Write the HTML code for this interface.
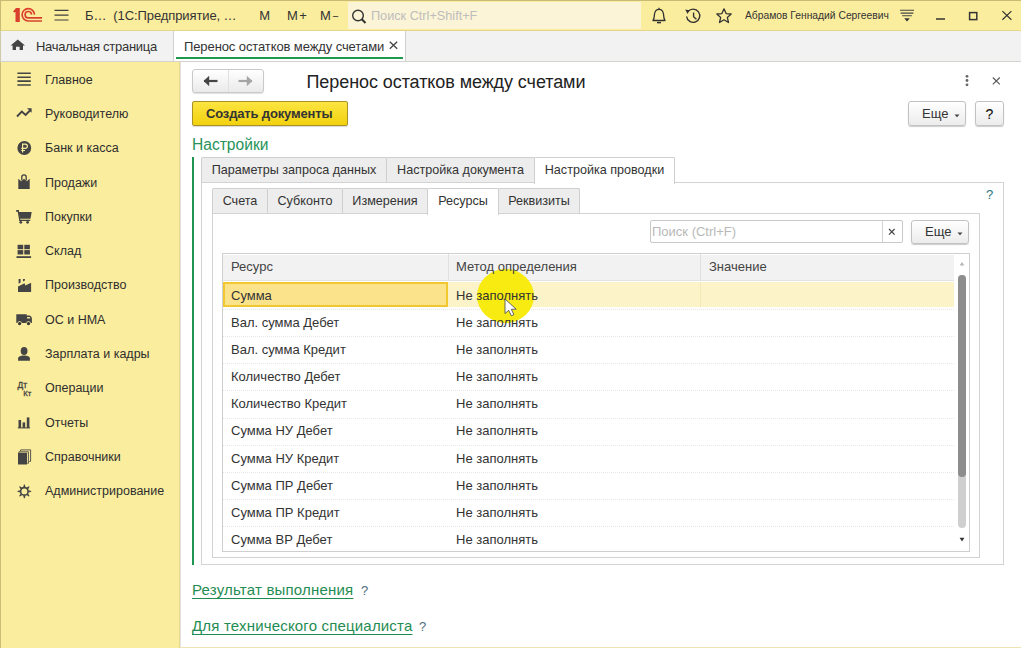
<!DOCTYPE html>
<html><head><meta charset="utf-8">
<style>
*{box-sizing:border-box;margin:0;padding:0}
html,body{width:1021px;height:648px;overflow:hidden;background:#fff;font-family:"Liberation Sans",sans-serif;color:#333}
.a{position:absolute;white-space:nowrap}
#top{position:absolute;left:0;top:0;width:1021px;height:31px;background:#FBED9E;border-top:1px solid #c9bb73;border-left:1px solid #c9bb73;border-bottom:1px solid #E6D68A}
#tabs{position:absolute;left:0;top:31px;width:1021px;height:31px;background:#F2F2F2;border-bottom:1px solid #d3d2cc;box-shadow:inset 1px 0 0 #cfc9a8}
#side{position:absolute;left:0;top:62px;width:180px;height:586px;background:#FBED9E;box-shadow:inset 1px 0 0 #cdbf78;border-right:1px solid #E9DA8E}
.si{position:absolute;left:45px;font-size:12.5px;color:#2e2e2e}
.ic{position:absolute;left:17px}
#form{position:absolute;left:180px;top:62px;width:841px;height:586px;background:#fff;border-left:1px solid #e2e2e2;border-bottom:1px solid #EDE3B3}
.btn{position:absolute;border:1px solid #b5b5b5;border-radius:2px;background:linear-gradient(#fff,#ececec);box-shadow:0 1px 1px rgba(0,0,0,.15);font-size:13px;color:#333}
.tab{position:absolute;height:25px;border:1px solid #cfcfcf;border-bottom:none;border-radius:2px 2px 0 0;background:#EDEDED;font-size:12.6px;color:#333;text-align:center;line-height:25px}
.tab.act{background:#fff;height:27px;z-index:1}
.row{position:absolute;left:0;width:734px;height:27px;border-bottom:1px dotted #e0e0e0;font-size:13px;color:#333}
.row span{position:absolute;top:6px}
</style></head><body>

<div id="top">
<svg class="a" style="left:-1px;top:-1px" width="50" height="30" viewBox="0 0 50 30">
<path d="M13.1 11.6 L16 7.9 L19.8 7.9 L19.8 22 L15.5 22 L15.5 11.9 L14.2 12.6 Z" fill="#D9412E"/>
<path d="M34.5 14.6 A6.2 6.2 0 1 0 28.3 21 L42 21" fill="none" stroke="#D9412E" stroke-width="1.7"/>
<path d="M31.5 14.6 A3.2 3.2 0 1 0 28.3 17.9 L42 17.9" fill="none" stroke="#D9412E" stroke-width="1.7"/>
</svg>
<svg class="a" style="left:53px;top:8px" width="16" height="13"><path d="M0.5 1.3H14.5M0.5 6.1H14.5M0.5 11H14.5" stroke="#3e3e3e" stroke-width="1.2"/></svg>
<div class="a" style="left:84px;top:7px;font-size:13px;letter-spacing:-0.1px;color:#333">Б…&nbsp; (1С:Предприятие, …</div>
<div class="a" style="left:258.3px;top:7px;font-size:13px;color:#333">М</div>
<div class="a" style="left:286px;top:7px;font-size:13px;color:#333">М<span style="margin-left:1.5px">+</span></div>
<div class="a" style="left:319px;top:7px;font-size:13px;color:#333">М<span style="margin-left:1.5px;font-size:11px">−</span></div>
<div class="a" style="left:347px;top:1px;width:293px;height:27px;background:#FCF4D6"></div>
<svg class="a" style="left:350px;top:7.5px" width="17" height="16"><circle cx="7" cy="6.5" r="5.3" fill="none" stroke="#333" stroke-width="1.4"/><path d="M10.8 10.3L14.5 14" stroke="#333" stroke-width="2"/></svg>
<div class="a" style="left:370px;top:7.5px;font-size:12.7px;color:#bdbdbd">Поиск Ctrl+Shift+F</div>
<svg class="a" style="left:648.5px;top:6px" width="18" height="18"><path d="M3 13.5 C4.5 11.5 4.2 9 4.5 7 C5 3.8 7 2.3 9 2.3 C11 2.3 13 3.8 13.5 7 C13.8 9 13.5 11.5 15 13.5 Z" fill="none" stroke="#333" stroke-width="1.3" stroke-linejoin="round"/><path d="M7 15.6H11" stroke="#333" stroke-width="1.5"/><path d="M8.4 1.5H9.6" stroke="#333" stroke-width="1.3"/></svg>
<svg class="a" style="left:681.5px;top:5px" width="19" height="18"><path d="M5.0 5.6 A6.6 6.6 0 1 1 3.6 10.5" fill="none" stroke="#333" stroke-width="1.4"/><path d="M2.2 3.6 L6.4 4.2 L4.6 8 Z" fill="#333"/><path d="M10.6 6.6V10.8L13.4 13.2" fill="none" stroke="#333" stroke-width="1.4"/></svg>
<svg class="a" style="left:714px;top:5.7px" width="18" height="18"><path d="M9 1.8 L11.1 6.6 L16.2 7 L12.3 10.4 L13.5 15.5 L9 12.8 L4.5 15.5 L5.7 10.4 L1.8 7 L6.9 6.6 Z" fill="none" stroke="#333" stroke-width="1.3" stroke-linejoin="round"/></svg>
<div class="a" style="left:744px;top:9px;font-size:10.3px;color:#333">Абрамов Геннадий Сергеевич</div>
<svg class="a" style="left:898px;top:7px" width="17" height="16"><path d="M1 2.3H15M1.6 5.1H14.4M3.2 7.8H12.8" stroke="#444" stroke-width="1.1"/><path d="M5.2 10.2H10.8L8 13.4Z" fill="#333"/></svg>
<svg class="a" style="left:934px;top:16px" width="12" height="4"><path d="M1 2H10" stroke="#333" stroke-width="1.5"/></svg>
<svg class="a" style="left:967px;top:10px" width="11" height="11"><rect x="1.6" y="1.6" width="7.2" height="7" fill="none" stroke="#333" stroke-width="1.5"/></svg>
<svg class="a" style="left:1000px;top:9px" width="12" height="12"><path d="M1.4 1.1L10.4 9.7M10.4 1.1L1.4 9.7" stroke="#333" stroke-width="1.2"/></svg>
</div>
<div id="tabs">
<svg class="a" style="left:10px;top:8px" width="16" height="12"><path d="M7.8 0.5 L15 6.5 L13 6.5 L13 11 L9.6 11 L9.6 7.8 L6 7.8 L6 11 L2.6 11 L2.6 6.5 L0.6 6.5 Z" fill="#444"/></svg>
<div class="a" style="left:36px;top:7.7px;font-size:13px;letter-spacing:-0.27px;color:#333">Начальная страница</div>
<div class="a" style="left:173px;top:0;width:233px;height:30px;background:#fff;border-left:1px solid #d0d0d0;border-right:1px solid #d0d0d0"></div>
<div class="a" style="left:176px;top:26px;width:227px;height:2px;background:#1E9A4F"></div>
<div class="a" style="left:184px;top:7.7px;font-size:13px;letter-spacing:-0.1px;color:#333">Перенос остатков между счетами</div>
<svg class="a" style="left:389px;top:10.2px" width="10" height="9"><path d="M0.8 0.8L8.2 7.8M8.2 0.8L0.8 7.8" stroke="#444" stroke-width="1.3"/></svg>
</div>
<div id="side">
<svg class="a" style="left:0;top:0" width="40" height="450" viewBox="0 62 40 450">
<path d="M17.4 73.3H30.8M17.4 77.2H30.8M17.4 81.1H30.8M17.4 85H30.8" stroke="#444" stroke-width="1.6"/>
<path d="M17 116.5 L21.8 111.5 L25.6 115 L30 110.5" fill="none" stroke="#444" stroke-width="1.9"/>
<path d="M27 108.2 L31.6 108.2 L31.6 112.8 Z" fill="#444"/>
<circle cx="24.3" cy="148" r="6.9" fill="#444"/>
<path d="M22.6 152.5V144.2H25.3A2.1 2.1 0 0 1 25.3 148.4H21.3M21.3 150.5H25" fill="none" stroke="#FBED9E" stroke-width="1.2"/>
<path d="M18.3 178.7 L21.3 181.2 L24 178.7 L26.8 181.2 L29.7 178.7 V188.9 H18.3 Z" fill="#444"/>
<path d="M21.8 180.5V177.1A2.2 2.2 0 0 1 26.2 177.1V180.5" fill="none" stroke="#444" stroke-width="1.3"/>
<rect x="16.2" y="210" width="2.8" height="1.8" fill="#444"/>
<path d="M18.2 211.2 L19.9 221" stroke="#444" stroke-width="1.2"/>
<path d="M18.6 212 H31.7 L30.5 218.8 H19.7 Z" fill="#444"/>
<rect x="19.5" y="219.7" width="10.7" height="1.3" fill="#444"/>
<circle cx="20.8" cy="222.3" r="1.4" fill="#444"/><circle cx="27.6" cy="222.3" r="1.4" fill="#444"/>
<rect x="17.6" y="244.8" width="5.6" height="4.4" fill="#444"/><rect x="24.3" y="244.8" width="5.6" height="4.4" fill="#444"/>
<rect x="17.6" y="250.1" width="5.6" height="4.4" fill="#444"/><rect x="24.3" y="250.1" width="5.6" height="4.4" fill="#444"/>
<rect x="16.5" y="256.2" width="14.6" height="1.8" fill="#444"/>
<path d="M18 292 V286.6 L24.6 283.2 L25.3 285.6 L31.1 282.8 V292 Z" fill="#444"/>
<path d="M18.6 279 H20.6 V282.5 L18.6 283.7 Z M23 279 H24.9 V280.4 L23 281.5 Z" fill="#444"/>
<path d="M16.3 314.3 H26.7 V315.4 H29.8 Q31.9 316.2 31.9 318.5 V323 H16.3 Z" fill="#444"/>
<path d="M27.1 317 H29.6 L30.3 318.6 H27.1 Z" fill="#FBED9E"/>
<circle cx="19.6" cy="323.6" r="2.3" fill="#FBED9E"/><circle cx="28.5" cy="323.6" r="2.3" fill="#FBED9E"/>
<circle cx="19.6" cy="323.6" r="1.6" fill="#333"/><circle cx="28.5" cy="323.6" r="1.6" fill="#333"/>
<ellipse cx="24.1" cy="351" rx="3.4" ry="3.9" fill="#444"/>
<path d="M18.1 360.8 V358.6 C18.1 356.5 20.5 355.6 24 355.6 C27.5 355.6 29.9 356.5 29.9 358.6 V360.8 Z" fill="#444"/>
<text x="17.6" y="387.6" font-family="Liberation Sans" font-size="8.4" fill="#444" stroke="#444" stroke-width="0.3">Дт</text>
<text x="23.2" y="395.6" font-family="Liberation Sans" font-size="7.8" fill="#444" stroke="#444" stroke-width="0.3">Кт</text>
<rect x="18.5" y="420" width="2.6" height="8" fill="#444"/><rect x="22.6" y="422.4" width="2.6" height="5.6" fill="#444"/><rect x="26.8" y="417.4" width="2.6" height="10.6" fill="#444"/>
<rect x="17.8" y="427.4" width="12.3" height="1" fill="#444"/>
<path d="M20.6 451 V449.9 H30.6 V461.4 H29.2" fill="none" stroke="#444" stroke-width="0.9"/>
<path d="M18.9 452.7 V451.8 H28.4 V463.3 H27.3" fill="none" stroke="#444" stroke-width="0.9"/>
<rect x="18" y="452.8" width="9" height="11.7" fill="#444"/>
<g transform="translate(24.35 491.4)">
<circle r="3.75" fill="none" stroke="#444" stroke-width="1.6"/>
<path d="M1.15 -4.00 L0.45 -6.90 L-0.45 -6.90 L-1.15 -4.00Z M3.64 -2.02 L5.20 -4.56 L4.56 -5.20 L2.02 -3.64Z M4.00 1.15 L6.90 0.45 L6.90 -0.45 L4.00 -1.15Z M2.02 3.64 L4.56 5.20 L5.20 4.56 L3.64 2.02Z M-1.15 4.00 L-0.45 6.90 L0.45 6.90 L1.15 4.00Z M-3.64 2.02 L-5.20 4.56 L-4.56 5.20 L-2.02 3.64Z M-4.00 -1.15 L-6.90 -0.45 L-6.90 0.45 L-4.00 1.15Z M-2.02 -3.64 L-4.56 -5.20 L-5.20 -4.56 L-3.64 -2.02Z" fill="#444"/>
</g>
</svg>
<div class="si" style="top:10.6px">Главное</div>
<div class="si" style="top:44.9px">Руководителю</div>
<div class="si" style="top:79.2px">Банк и касса</div>
<div class="si" style="top:113.5px">Продажи</div>
<div class="si" style="top:147.8px">Покупки</div>
<div class="si" style="top:182.1px">Склад</div>
<div class="si" style="top:216.4px">Производство</div>
<div class="si" style="top:250.7px">ОС и НМА</div>
<div class="si" style="top:285.0px">Зарплата и кадры</div>
<div class="si" style="top:319.3px">Операции</div>
<div class="si" style="top:353.6px">Отчеты</div>
<div class="si" style="top:387.9px">Справочники</div>
<div class="si" style="top:422.2px">Администрирование</div>
</div>
<div id="form">
<!-- nav buttons -->
<div class="a" style="left:11px;top:7px;width:72px;height:24px;border:1px solid #c9c9c9;border-radius:3px;background:linear-gradient(#fff,#eaeaea);box-shadow:0 1px 1px rgba(0,0,0,.12)"></div>
<div class="a" style="left:47px;top:8px;width:1px;height:22px;background:#e0e0e0"></div>
<svg class="a" style="left:22px;top:13px" width="16" height="12"><path d="M1 6H14.5" stroke="#444" stroke-width="2.2"/><path d="M0.6 6L6.2 0.8V11.2Z" fill="#444"/></svg>
<svg class="a" style="left:57px;top:13px" width="16" height="12"><path d="M0.5 6H14" stroke="#a5a5a5" stroke-width="2.2"/><path d="M14.4 6L8.8 0.8V11.2Z" fill="#a5a5a5"/></svg>
<div class="a" style="left:125.5px;top:10px;font-size:18px;letter-spacing:-0.08px;color:#222">Перенос остатков между счетами</div>
<svg class="a" style="left:782.5px;top:11.7px" width="6" height="14"><circle cx="3" cy="2.3" r="1.4" fill="#666"/><circle cx="3" cy="6.5" r="1.4" fill="#666"/><circle cx="3" cy="10.8" r="1.4" fill="#666"/></svg>
<svg class="a" style="left:811px;top:15px" width="10" height="10"><path d="M0.8 0.5L7.8 7.3M7.8 0.5L0.8 7.3" stroke="#555" stroke-width="1.1"/></svg>
<!-- create button -->
<div class="a" style="left:11px;top:39px;width:156px;height:25px;border:1px solid #A89228;border-radius:2px;background:linear-gradient(#FCE541,#F2D10E);box-shadow:0 1px 1px rgba(0,0,0,.15)"></div>
<div class="a" style="left:25px;top:44px;font-size:13px;font-weight:bold;letter-spacing:-0.15px;color:#333">Создать документы</div>
<!-- Еще / ? -->
<div class="a" style="left:727px;top:39px;width:58px;height:25px;border:1px solid #c2c2c2;border-radius:3px;background:linear-gradient(#fff,#ececec);box-shadow:0 1px 1px rgba(0,0,0,.2)"></div>
<div class="a" style="left:741px;top:44px;font-size:13px;color:#333">Еще</div>
<svg class="a" style="left:772.5px;top:52px" width="6" height="4"><path d="M0.5 0.5H5.5L3 3.3Z" fill="#444"/></svg>
<div class="a" style="left:794px;top:39px;width:29px;height:25px;border:1px solid #c2c2c2;border-radius:3px;background:linear-gradient(#fff,#ececec);box-shadow:0 1px 1px rgba(0,0,0,.2)"></div>
<div class="a" style="left:804.5px;top:43.5px;font-size:14px;color:#111;-webkit-text-stroke:0.15px #111">?</div>
<!-- group -->
<div class="a" style="left:11px;top:73.5px;font-size:15.6px;color:#27935A">Настройки</div>
<div class="a" style="left:11px;top:95px;width:2px;height:408px;background:#1F9553"></div>
<!-- outer tab page -->
<div class="a" style="left:20px;top:120px;width:803px;height:383px;border:1px solid #d3d3d3"></div>
<div class="tab" style="left:20px;top:95px;width:186px">Параметры запроса данных</div>
<div class="tab" style="left:205px;top:95px;width:149px">Настройка документа</div>
<div class="tab act" style="left:353px;top:95px;width:141px">Настройка проводки</div>
<div class="a" style="left:805px;top:125px;font-size:13px;color:#2F7480">?</div>
<!-- inner tab page -->
<div class="a" style="left:31px;top:151px;width:768px;height:345px;border:1px solid #d3d3d3"></div>
<div class="tab" style="left:31px;top:126px;width:56px">Счета</div>
<div class="tab" style="left:86px;top:126px;width:76px">Субконто</div>
<div class="tab" style="left:161px;top:126px;width:86px">Измерения</div>
<div class="tab act" style="left:246px;top:126px;width:72px">Ресурсы</div>
<div class="tab" style="left:317px;top:126px;width:82px">Реквизиты</div>
<!-- search -->
<div class="a" style="left:469px;top:158px;width:253px;height:23px;border:1px solid #c8c8c8;border-radius:2px;background:#fff"></div>
<div class="a" style="left:701px;top:159px;width:1px;height:21px;background:#d3d3d3"></div>
<div class="a" style="left:471px;top:162px;font-size:13px;color:#b8b8b8">Поиск (Ctrl+F)</div>
<svg class="a" style="left:707px;top:166px" width="8" height="8"><path d="M1 1L6.6 6.6M6.6 1L1 6.6" stroke="#444" stroke-width="1.2"/></svg>
<div class="a" style="left:730px;top:158px;width:58px;height:24px;border:1px solid #c2c2c2;border-radius:3px;background:linear-gradient(#fff,#ececec);box-shadow:0 1px 1px rgba(0,0,0,.2)"></div>
<div class="a" style="left:744px;top:161.5px;font-size:13px;color:#333">Еще</div>
<svg class="a" style="left:775.5px;top:169.5px" width="6" height="4"><path d="M0.5 0.5H5.5L3 3.3Z" fill="#444"/></svg>
<!-- table -->
<div id="tbl" class="a" style="left:41px;top:191px;width:748px;height:299px;border:1px solid #cfcfcf;overflow:hidden">
<div class="a" style="left:0;top:0;width:731px;height:27px;background:#F2F2F2;border-top:1px solid #fff;border-bottom:1px solid #e3e3e3"></div>
<div class="a" style="left:225px;top:0;width:1px;height:27px;background:#dde1e3"></div>
<div class="a" style="left:477px;top:0;width:1px;height:27px;background:#dde1e3"></div>
<div class="a" style="left:0;top:28px;width:731px;height:25px;background:#FCF3C8"></div>
<div class="a" style="left:0;top:28px;width:225px;height:25px;background:#FBE38C;border:2px solid #F2C830"></div>
<div class="a" style="left:477px;top:28px;width:1px;height:25px;background:#F3E8B8"></div>
<div class="a" style="left:0;top:55.00px;width:731px;height:0;border-top:1px dotted #e6e6e6"></div>
<div class="a" style="left:0;top:82.15px;width:731px;height:0;border-top:1px dotted #e6e6e6"></div>
<div class="a" style="left:0;top:109.30px;width:731px;height:0;border-top:1px dotted #e6e6e6"></div>
<div class="a" style="left:0;top:136.45px;width:731px;height:0;border-top:1px dotted #e6e6e6"></div>
<div class="a" style="left:0;top:163.60px;width:731px;height:0;border-top:1px dotted #e6e6e6"></div>
<div class="a" style="left:0;top:190.75px;width:731px;height:0;border-top:1px dotted #e6e6e6"></div>
<div class="a" style="left:0;top:217.90px;width:731px;height:0;border-top:1px dotted #e6e6e6"></div>
<div class="a" style="left:0;top:245.05px;width:731px;height:0;border-top:1px dotted #e6e6e6"></div>
<div class="a" style="left:0;top:272.20px;width:731px;height:0;border-top:1px dotted #e6e6e6"></div>
<svg class="a" style="left:736px;top:7px" width="8" height="6"><path d="M0.6 4.6H5.4L3 0.9Z" fill="#b5b5b5"/></svg>
<div class="a" style="left:735px;top:21px;width:7.6px;height:253px;border-radius:4px;background:#cfcfcf"></div>
<div class="a" style="left:735px;top:21px;width:7.6px;height:202px;border-radius:4px;background:#8d8d8d"></div>
<svg class="a" style="left:736px;top:283px" width="8" height="6"><path d="M0.6 0.8H5.4L3 4.6Z" fill="#333"/></svg>
<div class="a" style="left:253.7px;top:15.2px;width:57px;height:54px;border-radius:50%;background:#F7EB12"></div>
<div class="a" style="left:8px;top:5px;font-size:13px;color:#444">Ресурс</div>
<div class="a" style="left:233px;top:5px;font-size:13px;color:#444">Метод определения</div>
<div class="a" style="left:486px;top:5px;font-size:13px;color:#444">Значение</div>
<div class="a" style="left:8px;top:33.70px;font-size:13px;color:#333">Сумма</div>
<div class="a" style="left:233px;top:33.70px;font-size:13px;color:#333">Не заполнять</div>
<div class="a" style="left:8px;top:60.85px;font-size:13px;color:#333">Вал. сумма Дебет</div>
<div class="a" style="left:233px;top:60.85px;font-size:13px;color:#333">Не заполнять</div>
<div class="a" style="left:8px;top:88.00px;font-size:13px;color:#333">Вал. сумма Кредит</div>
<div class="a" style="left:233px;top:88.00px;font-size:13px;color:#333">Не заполнять</div>
<div class="a" style="left:8px;top:115.15px;font-size:13px;color:#333">Количество Дебет</div>
<div class="a" style="left:233px;top:115.15px;font-size:13px;color:#333">Не заполнять</div>
<div class="a" style="left:8px;top:142.30px;font-size:13px;color:#333">Количество Кредит</div>
<div class="a" style="left:233px;top:142.30px;font-size:13px;color:#333">Не заполнять</div>
<div class="a" style="left:8px;top:169.45px;font-size:13px;color:#333">Сумма НУ Дебет</div>
<div class="a" style="left:233px;top:169.45px;font-size:13px;color:#333">Не заполнять</div>
<div class="a" style="left:8px;top:196.60px;font-size:13px;color:#333">Сумма НУ Кредит</div>
<div class="a" style="left:233px;top:196.60px;font-size:13px;color:#333">Не заполнять</div>
<div class="a" style="left:8px;top:223.75px;font-size:13px;color:#333">Сумма ПР Дебет</div>
<div class="a" style="left:233px;top:223.75px;font-size:13px;color:#333">Не заполнять</div>
<div class="a" style="left:8px;top:250.90px;font-size:13px;color:#333">Сумма ПР Кредит</div>
<div class="a" style="left:233px;top:250.90px;font-size:13px;color:#333">Не заполнять</div>
<div class="a" style="left:8px;top:278.05px;font-size:13px;color:#333">Сумма ВР Дебет</div>
<div class="a" style="left:233px;top:278.05px;font-size:13px;color:#333">Не заполнять</div>
<svg class="a" style="left:280.6px;top:44px" width="15" height="20"><path d="M1 1 L1 15.6 L4.7 12.3 L7.4 17.8 L9.9 16.6 L7.3 11.3 L12.2 11.2 Z" fill="#fff" stroke="#555" stroke-width="0.9" stroke-linejoin="round"/></svg>
</div>
<!-- links -->
<div class="a" style="left:11px;top:519px;font-size:15px;letter-spacing:0.2px;color:#1F8C52;text-decoration:underline;text-underline-offset:2.6px;text-decoration-skip-ink:none">Результат выполнения</div>
<div class="a" style="left:180px;top:521px;font-size:13px;color:#4D6B7A">?</div>
<div class="a" style="left:11px;top:555px;font-size:15px;letter-spacing:0.18px;color:#1F8C52;text-decoration:underline;text-underline-offset:2.6px;text-decoration-skip-ink:none">Для технического специалиста</div>
<div class="a" style="left:238px;top:557px;font-size:13px;color:#4D6B7A">?</div>
</div>

</body></html>
